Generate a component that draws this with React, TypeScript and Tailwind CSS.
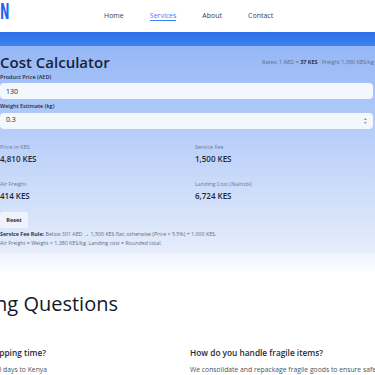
import React, { useState } from 'react';

const App = () => {
  const [price, setPrice] = useState('130');
  const [weight, setWeight] = useState('0.3');

  const results = [
    { label: 'Price in KES', value: '4,810 KES' },
    { label: 'Service Fee', value: '1,500 KES' },
    { label: 'Air Freight', value: '414 KES' },
    { label: 'Landing Cost (Nairobi)', value: '6,724 KES' },
  ];

  return (
    <div className="w-[375px] h-[375px] overflow-hidden bg-white" style={{ fontFamily: '"Open Sans", "Liberation Sans", sans-serif' }}>
      {/* header */}
      <div className="h-[32px] flex items-center relative">
        <span
          className="absolute left-[0px] top-[2px] text-[21px] font-bold text-[#2563eb] leading-none origin-left scale-x-[0.6]"
          style={{ fontFamily: '"DejaVu Sans Condensed", "DejaVu Sans", sans-serif' }}
        >
          N
        </span>
        <nav className="flex items-center gap-[26px] ml-[104px] text-[7px] text-[#374151]">
          <span>Home</span>
          <span className="text-[#3b82f6] border-b border-[#3b82f6] leading-[9px]">Services</span>
          <span>About</span>
          <span>Contact</span>
        </nav>
      </div>

      {/* banner strip */}
      <div className="h-[14px] bg-gradient-to-b from-[#2f6fe8] to-[#3d82f2]" />

      {/* calculator */}
      <div className="bg-gradient-to-b from-[#95b7f6] to-[#e6edfb] pt-[6px] pb-[5px]">
        <div className="flex items-center justify-between">
          <h2 className="text-[15px] font-semibold text-[#172238] leading-[20px]">Cost Calculator</h2>
          <span className="text-[5.5px] text-[#5b6b88] pr-[1px]">
            Rates: 1 AED = <b className="text-[#243550]">37 KES</b> · Freight 1,380 KES/kg
          </span>
        </div>

        <label className="block text-[5.5px] font-semibold text-[#1e2a40] mt-[1px]">Product Price (AED)</label>
        <input
          value={price}
          onChange={(e) => setPrice(e.target.value)}
          className="mt-[2px] block w-[373px] h-[16px] rounded-[4px] bg-[#f3f7fe] px-[6px] text-[7px] text-[#1f2937] outline-none"
        />

        <label className="block text-[5.5px] font-semibold text-[#1e2a40] mt-[3px]">Weight Estimate (kg)</label>
        <div className="mt-[2px] w-[373px] h-[16px] rounded-[4px] bg-[#f3f7fe] flex items-center px-[6px]">
          <input
            value={weight}
            onChange={(e) => setWeight(e.target.value)}
            className="flex-1 text-[7px] text-[#1f2937] outline-none bg-transparent"
          />
          <span className="flex flex-col text-[#6b7280] text-[3.5px] leading-[3.5px]">
            <span>▲</span>
            <span>▼</span>
          </span>
        </div>

        <div className="grid grid-cols-[195px_1fr] gap-y-[15px] mt-[14px]">
          {results.map((r) => (
            <div key={r.label}>
              <div className="text-[5.5px] text-[#6b7a93]">{r.label}</div>
              <div className="text-[8px] font-semibold text-[#1d2638] mt-[2px]">{r.value}</div>
            </div>
          ))}
        </div>

        <button className="mt-[10px] h-[16px] w-[28px] rounded-[3px] bg-[#eef3fc] text-[5.5px] font-bold text-[#1d2638]">
          Reset
        </button>

        <div className="mt-[2px] text-[5.3px] leading-[9px] text-[#5e6b80]">
          <div>
            <b className="text-[#2a3548]">Service Fee Rule:</b> Below 301 AED → 1,500 KES flat; otherwise (Price × 5.5%) + 1,000 KES.
          </div>
          <div>Air Freight = Weight × 1,380 KES/kg. Landing cost = Rounded total.</div>
        </div>
      </div>
      <div className="h-[20px] bg-gradient-to-b from-[#eef2fc] to-white" />

      {/* FAQ */}
      <div className="pt-[18px]">
        <div className="w-[118px] flex justify-end">
          <h2 className="whitespace-nowrap text-[20px] font-medium text-[#111827] leading-[26px]">Shipping Questions</h2>
        </div>
        <div className="grid grid-cols-[190px_1fr] mt-[30px]">
          <div>
            <div className="w-[46px] flex justify-end">
              <div className="text-[8.3px] font-semibold text-[#1f2937] whitespace-nowrap">What is the typical shipping time?</div>
            </div>
            <div className="w-[47px] flex justify-end mt-[6px]">
              <div className="text-[6.8px] text-[#4b5563] whitespace-nowrap">Usually 7–10 days to Kenya</div>
            </div>
          </div>
          <div>
            <div className="text-[8.3px] font-semibold text-[#1f2937] whitespace-nowrap">How do you handle fragile items?</div>
            <div className="text-[6.8px] text-[#4b5563] mt-[6px] whitespace-nowrap">We consolidate and repackage fragile goods to ensure safe delivery.</div>
          </div>
        </div>
      </div>
    </div>
  );
};

export default App;
